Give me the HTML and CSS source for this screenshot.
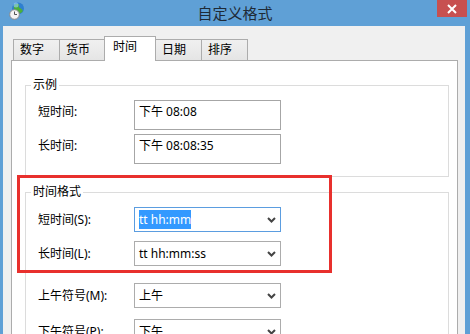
FILE: index.html
```html
<!DOCTYPE html>
<html lang="zh-CN">
<head>
    <meta charset="UTF-8">
    <title>自定义格式</title>
    <link rel="stylesheet" href="styles.css">
</head>
<body>

<div class="window">
    <div class="titlebar">
        <div class="tb-left">
            <svg class="app-icon" width="20" height="20" viewBox="0 0 20 20">
                <circle cx="14" cy="7.5" r="6" fill="#2f7fd0"/>
                <path d="M10 4 Q12 2 15 3 Q14 6 16 7 Q18 8 19 10 Q17 13 14 13 Q13 10 11 9 Q9 7 10 4 Z" fill="#4caf3a"/>
                <circle cx="12" cy="4" r="2.5" fill="#9fd0ff" opacity="0.6"/>
                <circle cx="10.5" cy="13.5" r="4.8" fill="#f4f4f4" stroke="#8a8a8a" stroke-width="1"/>
                <path d="M10.5 10.5 V13.5 H13" fill="none" stroke="#555" stroke-width="1"/>
            </svg>
        </div>
        <div class="title">自定义格式</div>
        <div class="tb-right">
            <div class="close">
                <svg width="10" height="10" viewBox="0 0 10 10">
                    <path d="M1 1 L9 9 M9 1 L1 9" stroke="#fff" stroke-width="2"/>
                </svg>
            </div>
        </div>
    </div>

    <div class="client">
        <div class="tabs">
            <div class="tab">数字</div>
            <div class="tab">货币</div>
            <div class="tab active">时间</div>
            <div class="tab">日期</div>
            <div class="tab">排序</div>
        </div>

        <div class="panel">
            <!-- 示例 -->
            <fieldset class="group">
                <legend>示例</legend>
                <div class="rows rows-sample">
                    <div class="row">
                        <span class="label">短时间:</span>
                        <div class="textbox">下午 08:08</div>
                    </div>
                    <div class="row">
                        <span class="label">长时间:</span>
                        <div class="textbox">下午 08:08:35</div>
                    </div>
                </div>
            </fieldset>

            <!-- 时间格式 -->
            <fieldset class="group group-format">
                <legend>时间格式</legend>
                <div class="rows">
                    <div class="row row-select row-1">
                        <span class="label">短时间(S):</span>
                        <div class="select focused">
                            <span class="value"><span class="highlight">tt hh:mm</span></span>
                            <svg class="chevron" width="9" height="6" viewBox="0 0 9 6"><polyline points="1,1 4.5,4.5 8,1" fill="none" stroke="#444" stroke-width="2"/></svg>
                        </div>
                    </div>
                    <div class="row row-select row-2">
                        <span class="label">长时间(L):</span>
                        <div class="select">
                            <span class="value">tt hh:mm:ss</span>
                            <svg class="chevron" width="9" height="6" viewBox="0 0 9 6"><polyline points="1,1 4.5,4.5 8,1" fill="none" stroke="#444" stroke-width="2"/></svg>
                        </div>
                    </div>
                    <div class="row row-select row-3">
                        <span class="label">上午符号(M):</span>
                        <div class="select">
                            <span class="value">上午</span>
                            <svg class="chevron" width="9" height="6" viewBox="0 0 9 6"><polyline points="1,1 4.5,4.5 8,1" fill="none" stroke="#444" stroke-width="2"/></svg>
                        </div>
                    </div>
                    <div class="row row-select row-4">
                        <span class="label">下午符号(P):</span>
                        <div class="select">
                            <span class="value">下午</span>
                            <svg class="chevron" width="9" height="6" viewBox="0 0 9 6"><polyline points="1,1 4.5,4.5 8,1" fill="none" stroke="#444" stroke-width="2"/></svg>
                        </div>
                    </div>
                </div>
            </fieldset>
        </div>
    </div>

    <!-- 标注框 -->
    <div class="annotation"></div>
</div>

</body>
</html>
```

FILE: styles.css
```css
html, body {
    margin: 0;
    padding: 0;
}
body {
    font-family: "Noto Sans", "Noto Sans CJK SC", sans-serif;
    font-size: 12px;
    color: #000;
}
.window {
    position: relative;
    width: 470px;
    height: 334px;
    overflow: hidden;
    background-color: #5fa0d6;
}
.titlebar {
    height: 26px;
    display: grid;
    grid-template-columns: 1fr auto 1fr;
}
.tb-left {
    padding: 1px 0 0 4px;
}
.app-icon {
    display: block;
}
.title {
    font-family: "Noto Sans CJK SC", sans-serif;
    font-size: 15px;
    line-height: 26px;
    color: #1e2a36;
}
.tb-right {
    display: flex;
    justify-content: flex-end;
    align-items: flex-start;
    padding-right: 3px;
}
.close {
    width: 30px;
    height: 17px;
    background-color: #c75050;
    display: flex;
    align-items: center;
    justify-content: center;
}
.client {
    margin: 0 5px 0 3px;
    height: 308px;
    background-color: #f0f0f0;
    padding: 10px 7px 0 8px;
    box-sizing: border-box;
}
.tabs {
    display: flex;
    align-items: flex-end;
    height: 24px;
    padding-left: 2px;
}
.tab {
    width: 47px;
    height: 21px;
    box-sizing: border-box;
    border: 1px solid #acacac;
    border-bottom: none;
    margin-right: -1px;
    padding: 2px 0 0 6px;
    line-height: 16px;
    background: linear-gradient(#f0f0f0, #e5e5e5);
}
.tab.active {
    position: relative;
    z-index: 1;
    width: 52px;
    height: 25px;
    margin: 0 -1px -1px -1px;
    padding-left: 8px;
    background: #fff;
}
.panel {
    background-color: #fff;
    border: 1px solid #acacac;
    height: 300px;
    padding-top: 16px;
    box-sizing: border-box;
}
.group {
    margin: 0 8px 0 13px;
    padding: 0;
    border: 1px solid #dcdcdc;
    min-inline-size: 0;
}
.group legend {
    margin-left: 5px;
    padding: 0 2px;
    line-height: 16px;
}
.rows {
    padding: 0 0 0 12px;
}
.rows-sample {
    padding-top: 7px;
    padding-bottom: 12px;
}
.row {
    display: flex;
    align-items: flex-start;
}
.row + .row {
    margin-top: 4px;
}
.label {
    width: 96px;
    line-height: 16px;
    padding-top: 4px;
}
.textbox {
    width: 147px;
    height: 30px;
    box-sizing: border-box;
    border: 1px solid #a6a6a6;
    padding: 3px 4px;
    line-height: 16px;
}
.group-format {
    margin-top: 7px;
    height: 200px;
}
.row-select {
    align-items: center;
}
.row-select .label {
    padding-top: 0;
}
.row-1 { margin-top: 7px; }
.row + .row-2 { margin-top: 9px; }
.row + .row-3 { margin-top: 17px; }
.row + .row-4 { margin-top: 11px; }
.select {
    width: 147px;
    height: 25px;
    box-sizing: border-box;
    border: 1px solid #acacac;
    padding: 0 4px 0 4px;
    display: flex;
    align-items: center;
    justify-content: space-between;
    line-height: 16px;
}
.select.focused {
    border-color: #5b9de0;
}
.highlight {
    background-color: #3399ff;
    color: #fff;
    padding: 1px 0;
}
.chevron {
    display: block;
}
.annotation {
    position: absolute;
    left: 17px;
    top: 175px;
    width: 315px;
    height: 98px;
    box-sizing: border-box;
    border: 3px solid #e8302d;
}
```
